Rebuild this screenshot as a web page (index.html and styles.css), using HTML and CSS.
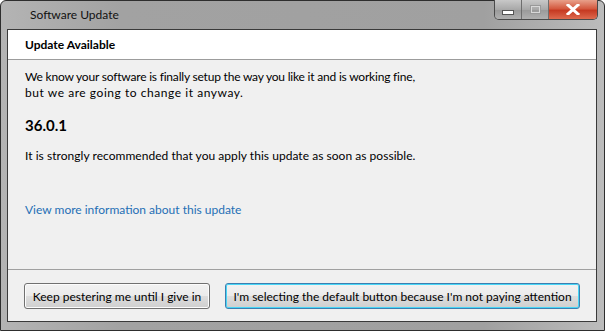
FILE: index.html
```html
<!DOCTYPE html>
<html lang="en">
<head>
    <meta charset="UTF-8">
    <title>Software Update</title>
    <link rel="stylesheet" href="styles.css">
</head>
<body>
    <div class="window">
        <div class="titlebar">
            <div class="title">Software Update</div>
            <div class="caption-buttons">
                <div class="cap cap-min"><span class="min-bar"></span></div>
                <div class="cap cap-max"><span class="max-box"></span></div>
                <div class="cap cap-close">
                    <svg width="14" height="11" viewBox="0 0 14 11">
                        <path d="M2 1 L12 10 M12 1 L2 10" stroke="#fff" stroke-width="3" stroke-linecap="square" fill="none"/>
                    </svg>
                </div>
            </div>
        </div>

        <div class="client">
            <div class="header">Update Available</div>

            <div class="content">
                <p class="intro">
                    <span class="intro-line tight">We know your software is finally setup the way you like it and is working fine,</span>
                    <span class="intro-line loose">but we are going to change it anyway.</span>
                </p>
                <div class="version">36.0.1</div>
                <p class="notice">It is strongly recommended that you apply this update as soon as possible.</p>
                <a class="more-link" href="#">View more information about this update</a>
            </div>

            <div class="footer">
                <button class="btn btn-keep">Keep pestering me until I give in</button>
                <button class="btn btn-default">I'm selecting the default button because I'm not paying attention</button>
            </div>
        </div>
    </div>
</body>
</html>
```

FILE: styles.css
```css
body {
    margin: 0;
    padding: 0;
    font-family: 'Lato', 'Open Sans', sans-serif;
    background: #fff;
}

.window {
    width: 605px;
    height: 331px;
    box-sizing: border-box;
    border: 1px solid #2e2e2e;
    border-radius: 6px 6px 0 0;
    background: linear-gradient(to right, #b4b4b4, #a2a2a2 20%, #a0a0a0 80%, #bcbcbc);
    display: flex;
    flex-direction: column;
    padding: 0 7px 8px 6px;
}

.titlebar {
    height: 28px;
    display: flex;
    justify-content: space-between;
    align-items: flex-start;
}

.title {
    font-size: 12px;
    color: #111;
    padding: 6px 0 0 23px;
    line-height: 16px;
}

.caption-buttons {
    display: flex;
    margin-top: -1px;
    margin-right: -1px;
    border: 1px solid #4a4a4a;
    border-top: none;
    border-radius: 0 0 5px 5px;
    overflow: hidden;
    height: 19px;
}

.cap {
    display: flex;
    align-items: center;
    justify-content: center;
}

.cap-min,
.cap-max {
    width: 26px;
    background: linear-gradient(#c8c8c8, #a8a8a8 50%, #999 51%, #b0b0b0);
    border-right: 1px solid #6e6e6e;
}

.min-bar {
    width: 10px;
    height: 3px;
    margin-top: 5px;
    background: #fff;
    border: 1px solid #555;
}

.max-box {
    width: 7px;
    height: 5px;
    border: 1px solid #d8d8d8;
    outline: 1px solid #999;
}

.cap-close {
    width: 48px;
    background: linear-gradient(#e8a08a, #d45a40 45%, #c63a22 55%, #de6a4e);
}

.client {
    flex: 1;
    border: 1px solid #3a3a3a;
    background: #f0f0f0;
    display: flex;
    flex-direction: column;
}

.header {
    height: 29px;
    background: #fff;
    border-bottom: 1px solid #9c9c9c;
    font-size: 12px;
    font-weight: bold;
    line-height: 29px;
    padding-left: 17px;
    color: #000;
}

.content {
    flex: 1;
    padding: 9px 17px 0;
    font-size: 12px;
    color: #000;
}

.intro {
    margin: 0;
    line-height: 16px;
}

.intro-line {
    display: block;
    white-space: nowrap;
}

.tight {
    letter-spacing: -0.2px;
}

.loose {
    letter-spacing: 0.55px;
}

.version {
    font-size: 15px;
    font-weight: bold;
    line-height: 20px;
    margin-top: 14px;
}

.notice {
    margin: 13px 0 0;
    line-height: 16px;
    letter-spacing: 0.04px;
}

.more-link {
    display: block;
    margin-top: 38px;
    line-height: 16px;
    color: #1f6fb5;
    text-decoration: none;
}

.footer {
    border-top: 1px solid #a0a0a0;
    height: 52px;
    box-sizing: border-box;
    display: flex;
    gap: 15px;
    padding: 13px 0 0 16px;
}

.btn {
    height: 26px;
    font-family: inherit;
    font-size: 12px;
    color: #000;
    padding: 0;
    white-space: nowrap;
    border: 1px solid #707070;
    border-radius: 3px;
    background: linear-gradient(#f2f2f2, #ebebeb 50%, #dddddd 51%, #cfcfcf);
    box-shadow: inset 0 0 0 1px #fcfcfc;
}

.btn-keep {
    width: 186px;
}

.btn-default {
    width: 355px;
    border-color: #3c7fb1;
    box-shadow: inset 0 0 0 1px #48d6f6;
}
```
